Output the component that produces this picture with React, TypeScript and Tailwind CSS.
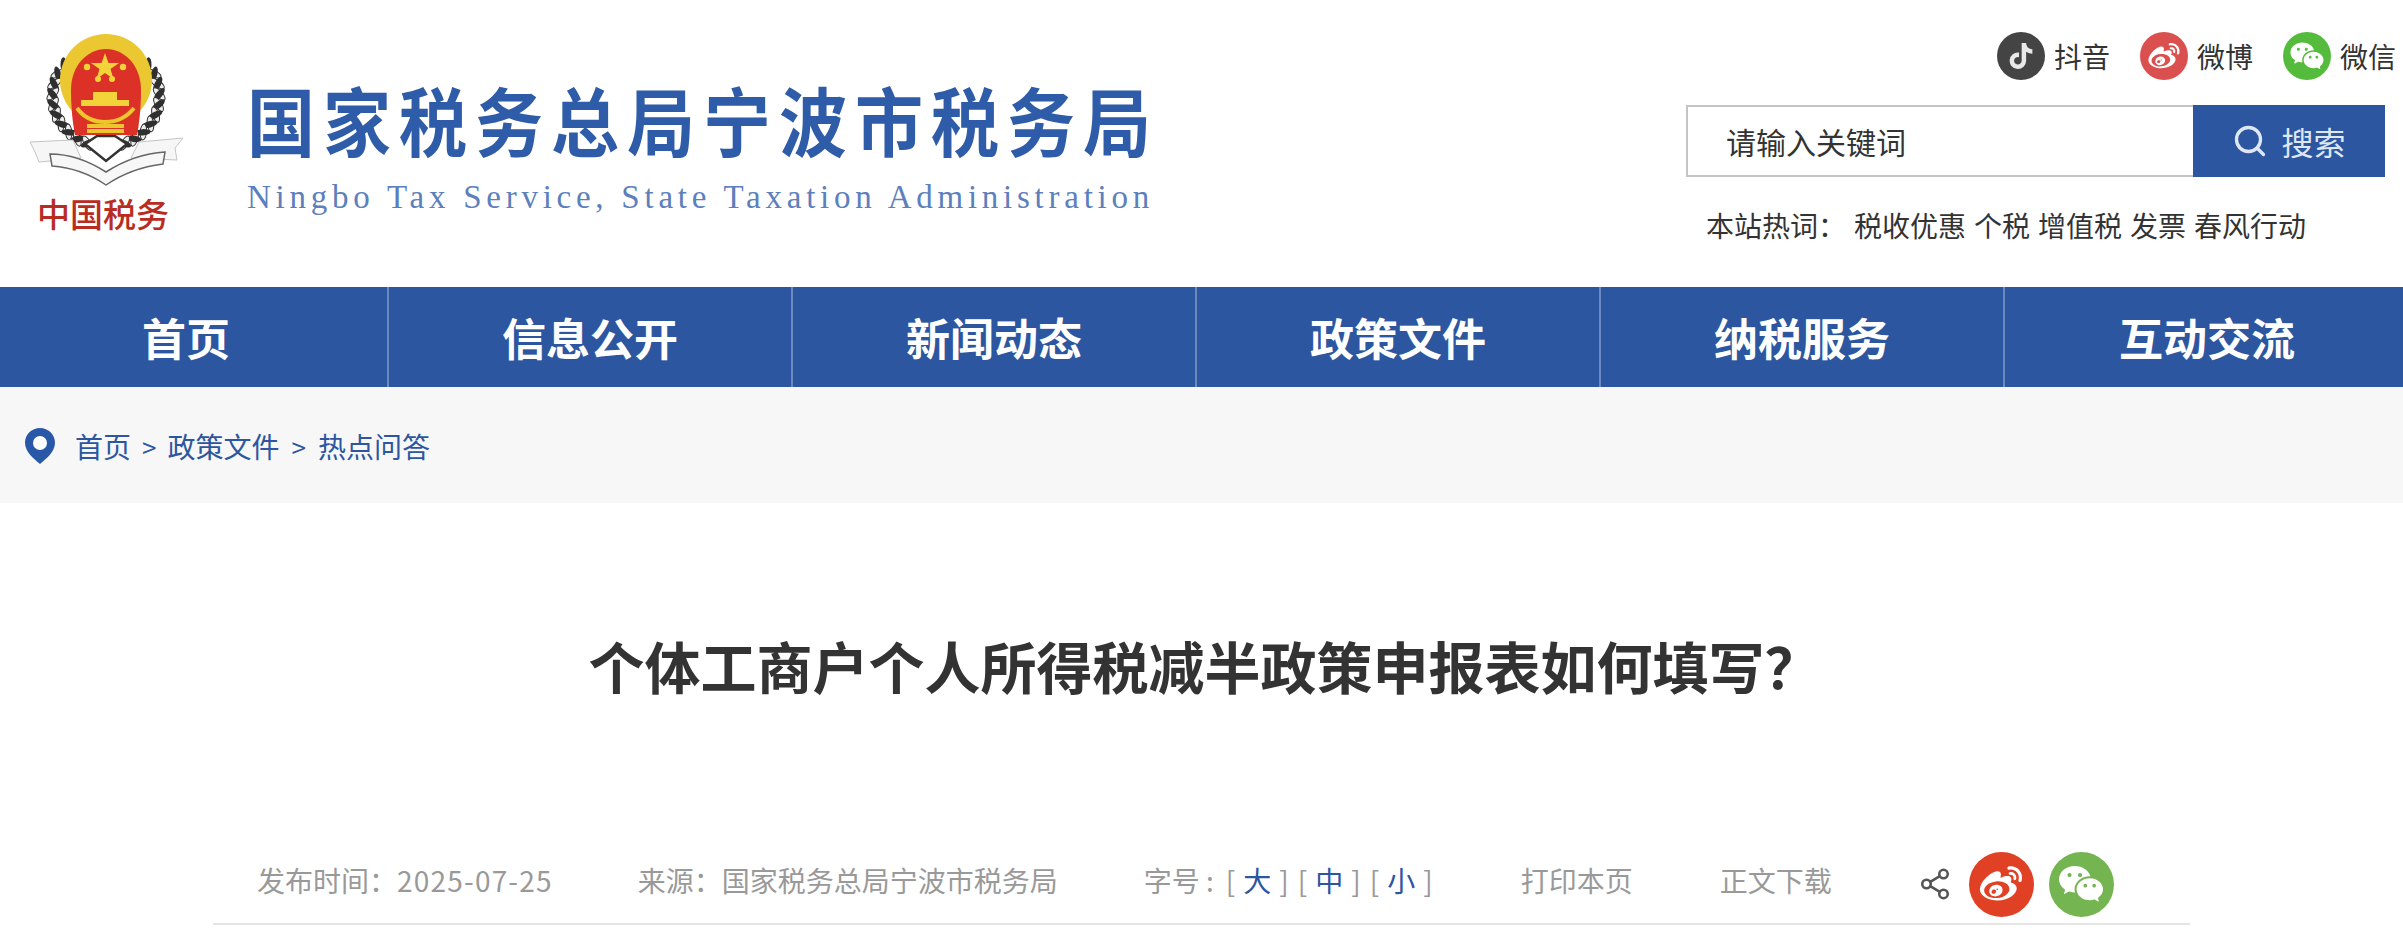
import { Search, Share2 } from 'lucide-react'
import { FaTiktok } from 'react-icons/fa'
import { RiWechatFill, RiWeiboFill } from 'react-icons/ri'

const cjk = "font-['Noto_Sans_CJK_SC','Noto_Sans',sans-serif]"

const navItems = ['首页', '信息公开', '新闻动态', '政策文件', '纳税服务', '互动交流']
const hotWords = ['税收优惠', '个税', '增值税', '发票', '春风行动']
const fontSizes = ['大', '中', '小']

// wreath leaves round one side of the emblem, as angles on a circle
const leafAngles = [212, 200, 188, 176, 164, 152, 140, 128, 116, 104]

const Emblem = () => (
  <svg viewBox="0 0 200 170" className="h-[170px] w-[200px] blur-[0.6px]">
    {[1, -1].map((side) => (
      <g key={side} transform={side === -1 ? 'translate(206 0) scale(-1 1)' : undefined}>
        {leafAngles.map((a) => {
          const rad = (a * Math.PI) / 180
          const x = 103 + 53 * Math.cos(rad)
          const y = 76 + 50 * Math.sin(rad)
          return (
            <g key={a} transform={`rotate(${a - 90} ${x} ${y})`}>
              <ellipse cx={x - 5} cy={y} rx="8" ry="3.2" transform={`rotate(-35 ${x - 5} ${y})`} fill="#2f2f2f" />
              <ellipse cx={x + 5} cy={y} rx="8" ry="3.2" transform={`rotate(35 ${x + 5} ${y})`} fill="#ececec" stroke="#333" strokeWidth="1" />
            </g>
          )
        })}
      </g>
    ))}
    {/* ribbon and book */}
    <path d="M27 122 L70 120 L78 138 L36 142 L32 132Z" fill="#f6f6f6" stroke="#c4c4c4" strokeWidth="1" />
    <path d="M180 118 L136 122 L128 138 L174 140 L172 128Z" fill="#f6f6f6" stroke="#c4c4c4" strokeWidth="1" />
    <path d="M47 134 Q75 134 103 152 Q131 134 162 132 L160 144 Q128 148 103 165 Q78 148 49 146Z" fill="#f7f7f7" stroke="#666" strokeWidth="1.5" />
    <path d="M82 124 L103 141 L124 124 L112 116 L94 116Z" fill="#fff" stroke="#333" strokeWidth="2.5" />
    {/* shield */}
    <ellipse cx="103" cy="60" rx="46" ry="46" fill="#ebc832" />
    <path d="M103 29 C84 29 68 46 68 70 C68 90 70 104 72 115 L134 115 C136 104 138 90 138 70 C138 46 122 29 103 29Z" fill="#dc3127" />
    <g fill="#f2d43a">
      <polygon points="102,33 105.5,43 116,43 107.5,49 110.5,59 102,53 93.5,59 96.5,49 88,43 98.5,43" />
      <circle cx="84" cy="47" r="3.2" />
      <circle cx="120" cy="47" r="3.2" />
      <circle cx="95" cy="59" r="3" />
      <circle cx="109" cy="59" r="3" />
      <rect x="90" y="72" width="24" height="8" />
      <rect x="78" y="80" width="48" height="6" />
    </g>
    <path d="M74 88 Q84 102 102 102 Q120 102 131 88 M84 106 L121 106 M84 111 L121 111" fill="none" stroke="#ecc62c" strokeWidth="4" />
  </svg>
)

const SocialLink = ({ bg, label, children }: { bg: string; label: string; children: React.ReactNode }) => (
  <div className="flex items-center gap-[9px]">
    <div className={`flex h-12 w-12 items-center justify-center rounded-full ${bg}`}>{children}</div>
    <span className="text-[28px] leading-none text-[#333]">{label}</span>
  </div>
)

export default function App() {
  return (
    <div className={`h-[942px] overflow-hidden bg-white ${cjk}`}>
      {/* Header */}
      <header className="flex h-[287px] justify-between">
        <div className="flex">
          <div className="flex w-[206px] flex-col items-center pt-5">
            <Emblem />
            <div className="mt-[7px] text-[33px] leading-none font-medium text-[#b92c22]">中国税务</div>
          </div>
          <div className="ml-[41px] pt-[77px]">
            <div className="origin-center scale-y-110 text-[68px] leading-[84px] font-bold tracking-[8px] whitespace-nowrap text-[#2e5ca8]">
              国家税务总局宁波市税务局
            </div>
            <div className="mt-[18px] font-['Liberation_Serif',serif] text-[33px] leading-9 tracking-[4.75px] whitespace-nowrap text-[#5c80bc]">
              Ningbo Tax Service, State Taxation Administration
            </div>
          </div>
        </div>

        <div className="flex w-[717px] flex-col items-end pt-[32px]">
          <div className="flex gap-[30px] pr-[7px]">
            <SocialLink bg="bg-[#444444]" label="抖音">
              <FaTiktok className="text-[26px] text-[#e8e8e8]" />
            </SocialLink>
            <SocialLink bg="bg-[#d9504f]" label="微博">
              <RiWeiboFill className="text-[34px] text-white" />
            </SocialLink>
            <SocialLink bg="bg-[#55bb3c]" label="微信">
              <RiWechatFill className="text-[36px] text-white" />
            </SocialLink>
          </div>
          <div className="mt-[25px] mr-[18px] flex h-[72px] w-[699px]">
            <div className="flex flex-1 items-center border-2 border-r-0 border-[#c4c4c4] pl-[38px] text-[30px] text-[#333]">
              请输入关键词
            </div>
            <div className="flex w-[192px] items-center justify-center gap-[13px] bg-[#2c56a0] text-[32px] text-[#dfe7f3]">
              <Search size={36} strokeWidth={2.2} />
              搜索
            </div>
          </div>
          <div className="mt-[28px] mr-[97px] flex items-center text-[28px] leading-[40px] whitespace-nowrap text-[#333]">
            <span className="mr-2">本站热词：</span>
            <div className="flex gap-2">
              {hotWords.map((word) => (
                <span key={word}>{word}</span>
              ))}
            </div>
          </div>
        </div>
      </header>

      {/* Nav */}
      <nav className="-ml-[15px] flex h-[100px] w-[2424px] bg-[#2c56a0]">
        {navItems.map((item, i) => (
          <div
            key={item}
            className={`flex w-[404px] items-center justify-center pb-px text-[44px] font-bold text-white ${
              i < 5 ? 'border-r-2 border-[#6c8abf]' : ''
            }`}
          >
            {item}
          </div>
        ))}
      </nav>

      {/* Breadcrumb */}
      <div className="flex h-[116px] items-center bg-[#f7f7f7] pt-[2px] pl-[25px] text-[28px] text-[#2c56a0]">
        <svg viewBox="0 0 30 36" className="mr-5 h-9 w-[30px]">
          <path d="M15 0C6.7 0 0 6.6 0 14.8C0 24 9 31 15 36C21 31 30 24 30 14.8C30 6.6 23.3 0 15 0Z" fill="#2a58a8" />
          <circle cx="15" cy="15" r="7" fill="#fff" />
        </svg>
        <span>首页</span>
        <span className="mx-[11px] text-[26px]">&gt;</span>
        <span>政策文件</span>
        <span className="mx-3 text-[26px]">&gt;</span>
        <span>热点问答</span>
      </div>

      {/* Article head */}
      <main className="mx-auto w-[1977px]">
        <h1 className="pt-[123px] pl-[6px] text-center text-[56px] leading-[78px] font-bold text-[#333]">
          个体工商户个人所得税减半政策申报表如何填写？
        </h1>
        <div className="mt-[141px] flex h-[80px] items-center border-b-2 border-[#e5e5e5] pb-2 pl-11 text-[28px] whitespace-nowrap text-[#999]">
          <span>
            发布时间：<span className="tracking-[1.2px]">2025-07-25</span>
          </span>
          <span className="ml-[85px]">来源：国家税务总局宁波市税务局</span>
          <span className="ml-[86px] w-[82px]">字号 :</span>
          <div className="flex gap-[9px]">
            {fontSizes.map((size) => (
              <span key={size} className="flex gap-2">
                [<span className="text-[#2c56a0]">{size}</span>]
              </span>
            ))}
          </div>
          <span className="ml-[88px]">打印本页</span>
          <span className="ml-[87px]">正文下载</span>
          <Share2 size={34} strokeWidth={1.8} className="mt-2 ml-[86px] text-[#555]" />
          <div className="mt-2 ml-[17px] flex h-[65px] w-[65px] items-center justify-center rounded-full bg-[#e04124]">
            <RiWeiboFill className="text-[46px] text-white" />
          </div>
          <div className="mt-2 ml-[15px] flex h-[65px] w-[65px] items-center justify-center rounded-full bg-[#75b551]">
            <RiWechatFill className="text-[48px] text-white" />
          </div>
        </div>
      </main>
    </div>
  )
}
